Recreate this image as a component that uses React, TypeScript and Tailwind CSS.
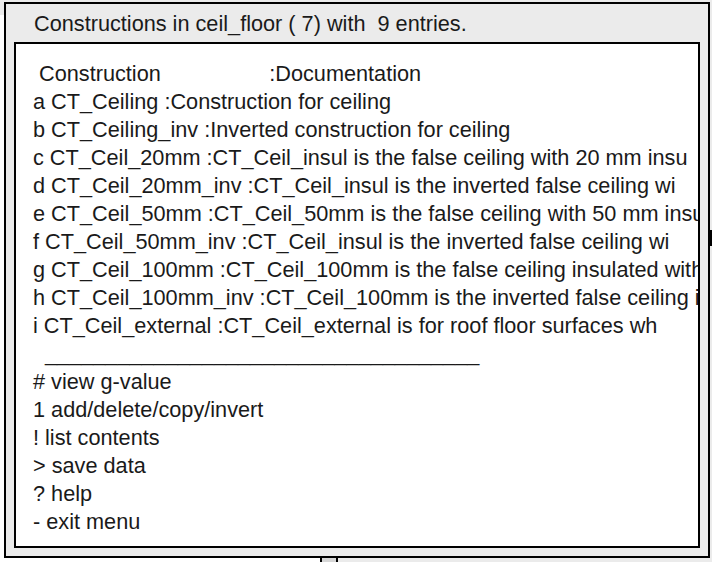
const entries = [
  'a CT_Ceiling :Construction for ceiling',
  'b CT_Ceiling_inv :Inverted construction for ceiling',
  'c CT_Ceil_20mm :CT_Ceil_insul is the false ceiling with 20 mm insu',
  'd CT_Ceil_20mm_inv :CT_Ceil_insul is the inverted false ceiling wi',
  'e CT_Ceil_50mm :CT_Ceil_50mm is the false ceiling with 50 mm insul',
  'f CT_Ceil_50mm_inv :CT_Ceil_insul is the inverted false ceiling wi',
  'g CT_Ceil_100mm :CT_Ceil_100mm is the false ceiling insulated with',
  'h CT_Ceil_100mm_inv :CT_Ceil_100mm is the inverted false ceiling i',
  'i CT_Ceil_external :CT_Ceil_external is for roof floor surfaces wh',
]

const actions = [
  '# view g-value',
  '1 add/delete/copy/invert',
  '! list contents',
  '> save data',
  '? help',
  '- exit menu',
]

export default function App() {
  return (
    <div className="relative w-[712px] h-[562px] overflow-hidden bg-[#ebebeb] pl-[4px] pt-[2px] text-[21.7px] leading-[28px] text-[#1a1a1a] font-['Liberation_Sans',Arial,sans-serif]">
      {/* window behind */}
      <div className="absolute left-0 top-[15px] w-[320px] h-[547px] bg-white" />
      <div className="absolute left-[320px] top-[540px] w-[18px] h-[30px] border-x-2 border-black bg-[#d6d6d6]" />
      <div className="absolute left-[710px] top-[230px] w-[2px] h-[16px] bg-black" />

      {/* menu window */}
      <div className="relative w-[706px] h-[556px] border-2 border-black bg-[#ebebeb] flex flex-col">
        <div className="h-[38px] pl-[28px] pt-[6px] whitespace-pre">Constructions in ceil_floor ( 7) with  9 entries.</div>
        <div className="flex-1 mx-[8px] mb-[8px] border-2 border-black bg-white overflow-hidden pl-[17px] pt-[16px] whitespace-pre">
          <div>{' Construction                  :Documentation'}</div>
          {entries.map((e) => (
            <div key={e}>{e}</div>
          ))}
          <div>{'  ' + '_'.repeat(36)}</div>
          {actions.map((a) => (
            <div key={a}>{a}</div>
          ))}
        </div>
      </div>
    </div>
  )
}
